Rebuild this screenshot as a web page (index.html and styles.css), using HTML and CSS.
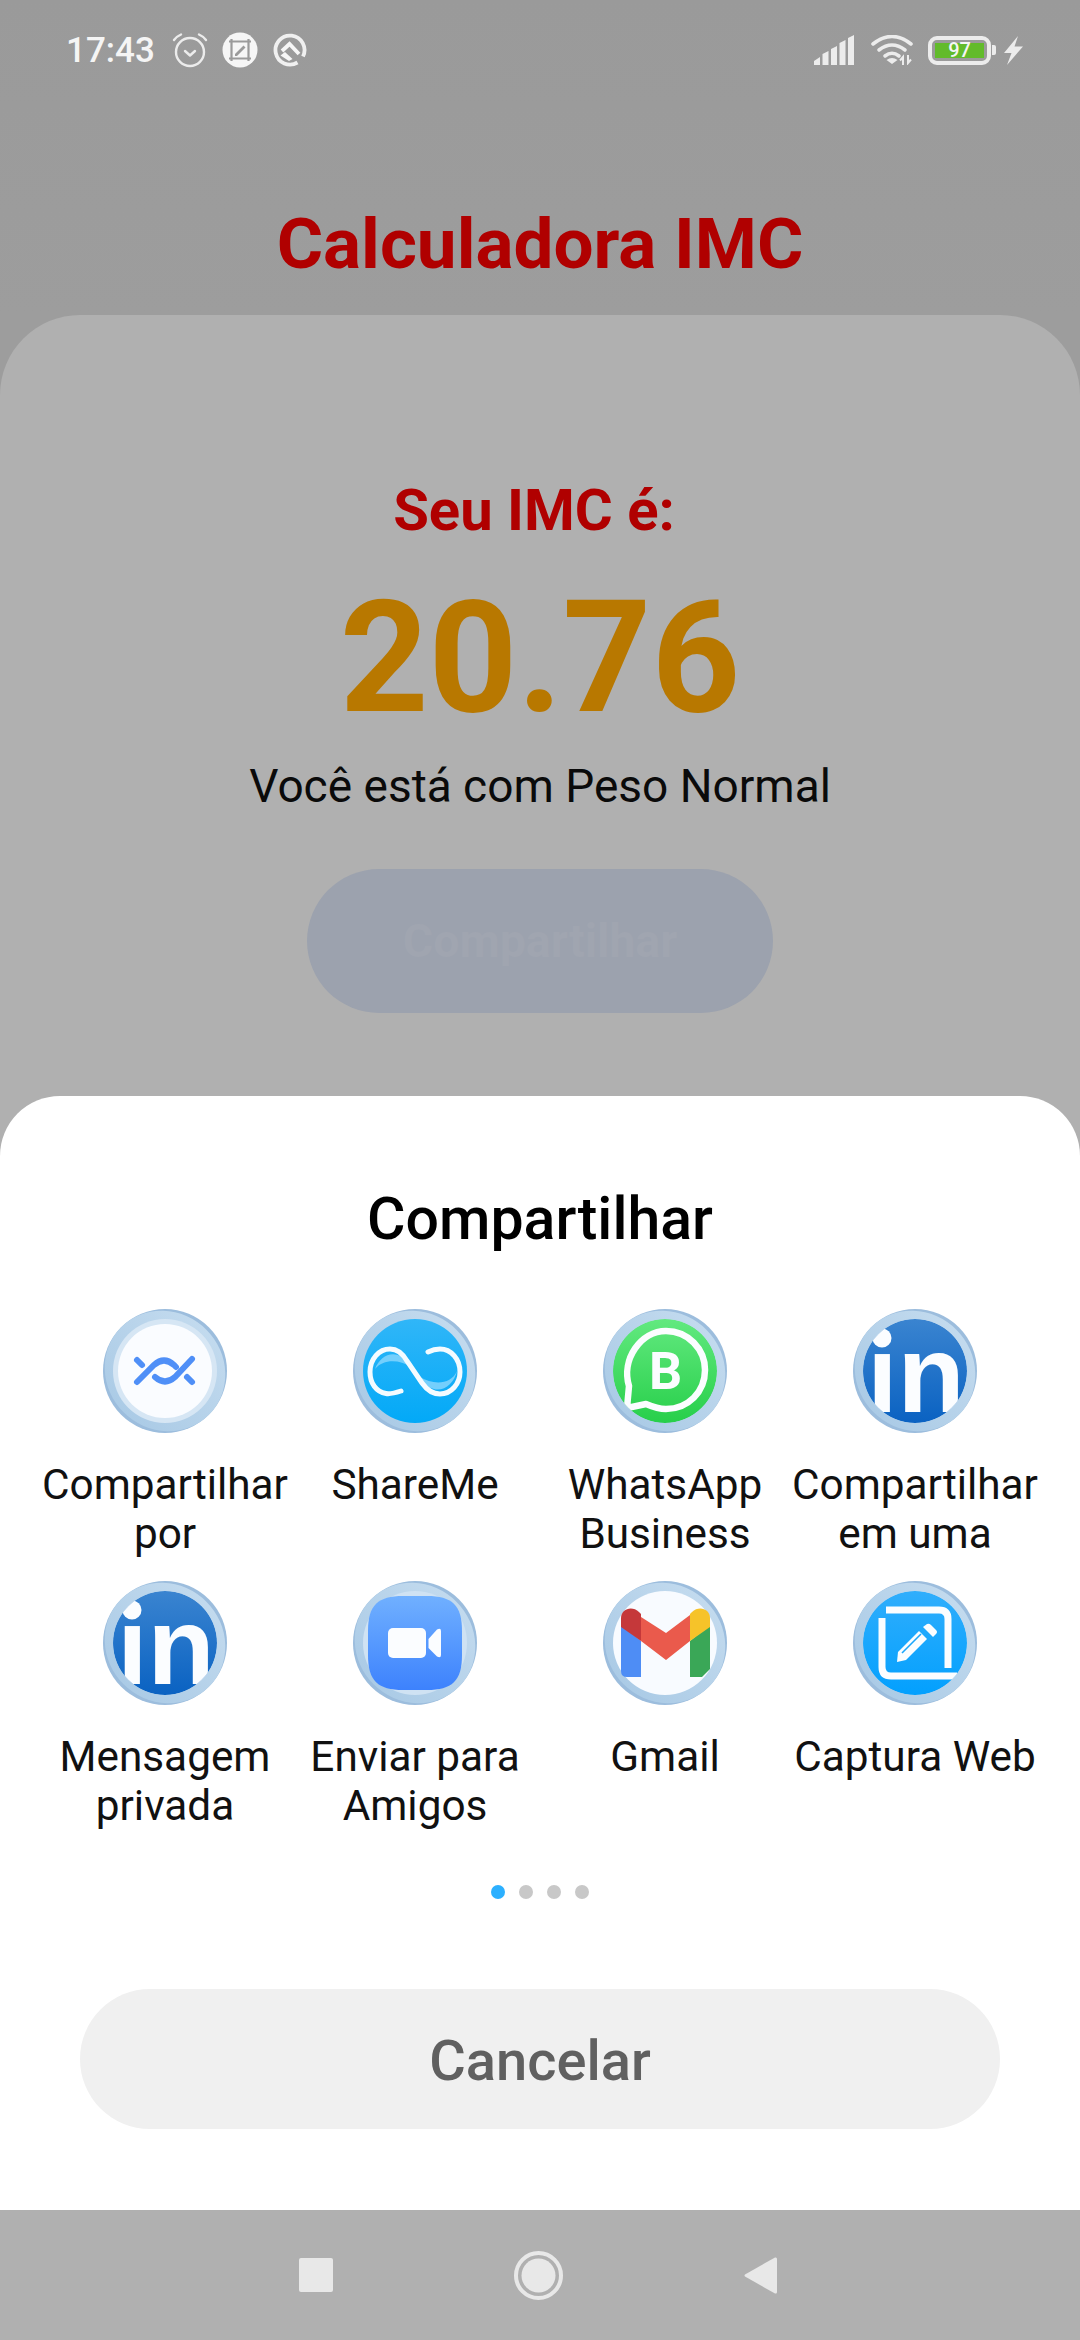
FILE: index.html
```html
<!DOCTYPE html>
<html lang="pt">
<head>
<meta charset="utf-8">
<title>Calculadora IMC</title>
<link rel="stylesheet" href="styles.css">
</head>
<body>
<svg class="defs" aria-hidden="true">
  <defs>
    <linearGradient id="ringFill" x1="0" y1="0" x2="0" y2="1"><stop offset="0" stop-color="#c2daee"/><stop offset="1" stop-color="#abcbe6"/></linearGradient>
    <linearGradient id="gSky" x1="0" y1="0" x2="0" y2="1"><stop offset="0" stop-color="#30b6f8"/><stop offset="1" stop-color="#03a9f7"/></linearGradient>
    <linearGradient id="gGreen" x1="0" y1="0" x2="0" y2="1"><stop offset="0" stop-color="#62e97f"/><stop offset="1" stop-color="#27cf4a"/></linearGradient>
    <linearGradient id="gLinked" x1="0" y1="0" x2="0" y2="1"><stop offset="0" stop-color="#3a84d0"/><stop offset="1" stop-color="#0a62c2"/></linearGradient>
    <linearGradient id="gZoom" x1="0" y1="0" x2="0" y2="1"><stop offset="0" stop-color="#70b0ff"/><stop offset="1" stop-color="#3d82fd"/></linearGradient>
    <linearGradient id="gCapture" x1="0" y1="0" x2="0" y2="1"><stop offset="0" stop-color="#30aefc"/><stop offset="1" stop-color="#03a0fe"/></linearGradient>
    <clipPath id="disc"><circle cx="62" cy="62" r="52"/></clipPath>
    <g id="ring">
      <circle cx="62" cy="62" r="62" fill="#9cbddd"/>
      <ellipse cx="62" cy="62" rx="62" ry="58.500" transform="rotate(45 62 62)" fill="url(#ringFill)"/>
    </g>
    <g id="linkedin" clip-path="url(#disc)">
      <circle cx="62" cy="62" r="52" fill="url(#gLinked)"/>
      <circle cx="29" cy="29" r="9.500" fill="#fbfdff"/>
      <text x="14" y="103" class="logo-in">ın</text>
    </g>
  </defs>
</svg>

<main class="screen">
  <div class="app">
    <header class="status">
      <div class="status-left">
        <span class="clock">17:43</span>
        <svg class="st-icon" width="36" height="36" viewBox="0 0 36 36" aria-hidden="true"><g fill="none" stroke="#ececec" stroke-width="2.400" stroke-linecap="round" stroke-linejoin="round"><circle cx="18" cy="20" r="14"/><path d="M2 8 Q4.500 4.500 9 2.500M34 8 Q31.500 4.500 27 2.500"/><path d="M13 19 L18 23.500 L23 19"/></g></svg>
        <svg class="st-icon" width="36" height="36" viewBox="0 0 36 36" aria-hidden="true"><circle cx="18" cy="18" r="17.500" fill="#f6f6f6"/><path d="M7 9.500 H29 M26.500 7 V29 M29 26.500 H7 M9.500 29 V7" fill="none" stroke="#9b9b9b" stroke-width="2.200"/><path d="M13 22 L21.500 13.500 L23.500 15.500 L15 24 H13Z" fill="#9b9b9b"/></svg>
        <svg class="st-icon" width="36" height="36" viewBox="0 0 36 36" aria-hidden="true"><path d="M25.500 30.500 A14.500 14.500 0 1 1 31 24.500" fill="none" stroke="#f0f0f0" stroke-width="3.800"/><path d="M10 19 L17.500 12 L27 22" fill="none" stroke="#f6f6f6" stroke-width="3.800"/><path d="M13 20 L20.500 27 L17 29 L8.500 23.500Z" fill="#f6f6f6"/></svg>
      </div>
      <div class="status-right">
        <svg width="40" height="30" viewBox="0 0 40 30" aria-hidden="true"><path d="M0 30 V26 L6 22 V30Z M8.500 30 V19 L14.500 16 V30Z M17 30 V14 L23 11 V30Z M25.500 30 V8 L31.500 5 V30Z M34 30 V3 L40 0 V30Z" fill="#ececec"/></svg>
        <svg class="wifi" width="44" height="30" viewBox="0 0 44 30" aria-hidden="true"><g fill="none" stroke="#ececec" stroke-width="3.600" stroke-linecap="round"><path d="M2 9 Q21 -6 40 9"/><path d="M8 15 Q21 5 34 15"/><path d="M14 21 Q21 15.500 28 21"/></g><path d="M15.500 25 Q21 21 26.500 25 L21 29Z" fill="#ececec"/><path d="M32 30 V22 L29 25.500 M37 20 V28 L40 24.500" fill="none" stroke="#ececec" stroke-width="2"/></svg>
        <div class="battery">
          <div class="battery-shell"><span class="battery-level">97</span></div>
          <span class="battery-nub"></span>
        </div>
        <svg width="20" height="29" viewBox="0 0 20 29" aria-hidden="true"><path d="M14 0 L0 17 H7.500 L3 29 L19 10.500 H10.500Z" fill="#ececec"/></svg>
      </div>
    </header>
    <h1 class="app-title">Calculadora IMC</h1>
    <section class="card">
      <h2 class="result-label">Seu IMC é:</h2>
      <p class="result-value">20.76</p>
      <p class="result-text">Você está com Peso Normal</p>
      <div class="share-button">Compartilhar</div>
    </section>
  </div>

  <div class="overlay">
    <section class="sheet">
      <h2 class="sheet-title">Compartilhar</h2>
      <div class="apps">
        <div class="app-item">
          <svg class="app-icon" viewBox="0 0 124 124" aria-hidden="true"><use href="#ring"/><circle cx="62" cy="62" r="52" fill="#d6e6f4"/><circle cx="62" cy="62" r="47" fill="#fafcff"/><g fill="none" stroke="#4f8ff7" stroke-width="6" stroke-linecap="round"><path d="M34 73 L51 56 Q61 47 71 56 L73 58"/><path d="M52 68 Q62 77 72 68 L89 50"/><path d="M34 51 L39 56"/><path d="M84 68 L89 73"/></g></svg>
          <span class="app-label">Compartilhar por</span>
        </div>
        <div class="app-item">
          <svg class="app-icon" viewBox="0 0 124 124" aria-hidden="true"><use href="#ring"/><circle cx="62" cy="62" r="52" fill="url(#gSky)"/><path d="M22 60 C28 44 46 38 58 58 C46 50 30 50 22 60Z M67 68 C80 76 98 76 104 62 C100 80 80 90 67 68Z" fill="#74cffc"/><path d="M48 82 C42 84 36 85 33 84.500 C23 83 17 74 17 63 C17 50 26 40 37 40 C45 40 50 45 54 52 L69 74 C74 81 80 85 87 85 C98 85 107 75 107 63 C107 50 98 40 87 40 C83 40 79 41 75 43" fill="none" stroke="#f4fbff" stroke-width="5" stroke-linecap="round"/></svg>
          <span class="app-label">ShareMe</span>
        </div>
        <div class="app-item">
          <svg class="app-icon" viewBox="0 0 124 124" aria-hidden="true"><use href="#ring"/><g clip-path="url(#disc)"><circle cx="62" cy="62" r="52" fill="url(#gGreen)"/><path d="M26 77 C18 50 38 22 63 22 C85 22 102 40 102 61 C102 83 85 100 63 100 C56 100 50 98 43 95 L24 99Z" fill="none" stroke="#fbfdff" stroke-width="6.500" stroke-linejoin="round"/><text x="62.500" y="80" class="logo-b">B</text></g></svg>
          <span class="app-label">WhatsApp Business</span>
        </div>
        <div class="app-item">
          <svg class="app-icon" viewBox="0 0 124 124" aria-hidden="true"><use href="#ring"/><use href="#linkedin"/></svg>
          <span class="app-label">Compartilhar em uma</span>
        </div>
        <div class="app-item">
          <svg class="app-icon" viewBox="0 0 124 124" aria-hidden="true"><use href="#ring"/><use href="#linkedin"/></svg>
          <span class="app-label">Mensagem privada</span>
        </div>
        <div class="app-item">
          <svg class="app-icon" viewBox="0 0 124 124" aria-hidden="true"><use href="#ring"/><circle cx="62" cy="62" r="52" fill="#cfe2f3"/><path d="M15 50 C15 24 25 15 50 15 H74 C99 15 109 24 109 50 V74 C109 100 99 109 74 109 H50 C25 109 15 100 15 74Z" fill="url(#gZoom)"/><rect x="35" y="47" width="38" height="30" rx="5" fill="#fbfdff"/><path d="M75.500 58 L84 48.500 Q88 46.500 88 50 V74 Q88 77.500 84 75.500 L75.500 67Z" fill="#fbfdff"/></svg>
          <span class="app-label">Enviar para Amigos</span>
        </div>
        <div class="app-item">
          <svg class="app-icon" viewBox="0 0 124 124" aria-hidden="true"><use href="#ring"/><circle cx="62" cy="62" r="52" fill="#f8fbff"/><path d="M18 44 L38 60 V96 H24 Q18 96 18 90Z" fill="#4e8df5"/><path d="M107 44 L87 60 V96 H99 L107 88Z" fill="#3aa757"/><path d="M38 36 L63 52 L87 34 V60 L63 79 L38 60Z" fill="#ea5a4c"/><path d="M18 46 V37 C18 28 29 24 36 31 L38 33 V60Z" fill="#c5383a"/><path d="M107 46 V37 C107 28 96 24 89 31 L87 33 V60Z" fill="#f6c329"/></svg>
          <span class="app-label">Gmail</span>
        </div>
        <div class="app-item">
          <svg class="app-icon" viewBox="0 0 124 124" aria-hidden="true"><use href="#ring"/><g clip-path="url(#disc)"><circle cx="62" cy="62" r="52" fill="url(#gCapture)"/><g fill="none" stroke="#fbfdff" stroke-width="7"><path d="M33 29 H86 Q95 29 95 38 V87"/><path d="M29 37 V86 Q29 95 38 95 H104"/></g><path d="M44 81 L45 71 L66 50 L74 58 L53 79Z" fill="#fbfdff"/><path d="M70 46 L74 43 Q76 42 78 44 L83 49 Q85 51 83 53 L80 56Z" fill="#fbfdff"/><path d="M49 72 L68 53" stroke="#1aa6fb" stroke-width="1.600"/></g></svg>
          <span class="app-label">Captura Web</span>
        </div>
      </div>
      <div class="dots">
        <span class="dot dot-active"></span>
        <span class="dot"></span>
        <span class="dot"></span>
        <span class="dot"></span>
      </div>
      <div class="cancel">Cancelar</div>
    </section>
    <nav class="nav">
      <span class="nav-square"></span>
      <svg width="49" height="49" viewBox="0 0 49 49" aria-hidden="true"><circle cx="24.500" cy="24.500" r="22.500" fill="none" stroke="#e8e8e8" stroke-width="4"/><circle cx="24.500" cy="24.500" r="17" fill="#e8e8e8"/></svg>
      <svg width="33" height="37" viewBox="0 0 33 37" aria-hidden="true"><path d="M1 17.500 L31 .5 Q33 0 33 2 V35 Q33 37 31 36.500 L1 19.500 Q0 18.500 1 17.500Z" fill="#e8e8e8"/></svg>
    </nav>
  </div>
</main>
</body>
</html>
```
FILE: styles.css
```css
* { box-sizing: border-box; }
html, body { margin: 0; padding: 0; }
body { font-family: Roboto, "Liberation Sans", sans-serif; }
.defs { position: absolute; width: 0; height: 0; }

.screen {
  position: relative;
  width: 1080px;
  height: 2340px;
  overflow: hidden;
  background: linear-gradient(#9a9a9a, #9d9d9d 315px);
}
.app { display: flex; flex-direction: column; height: 100%; }

.status {
  height: 100px;
  flex: none;
  display: flex;
  justify-content: space-between;
  align-items: center;
  padding: 0 56px 0 66px;
}
.status-left { display: flex; align-items: center; gap: 14px; }
.clock { font-size: 35px; font-weight: 500; color: #f5f5f5; margin-right: 3px; }
.st-icon { display: block; }
.status-right { display: flex; align-items: center; gap: 17px; }
.wifi { margin-right: -4px; }
.battery { display: flex; align-items: center; gap: 1px; margin-right: -9px; }
.battery-shell {
  width: 63px;
  height: 29px;
  border: 4px solid #ececec;
  border-radius: 9px;
  padding: 3px;
  display: flex;
}
.battery-level {
  flex: 1;
  background: #62bb2b;
  color: #f5f5f5;
  font-size: 20px;
  line-height: 15px;
  text-align: center;
  font-weight: 500;
}
.battery-nub { width: 4px; height: 10px; background: #ececec; border-radius: 0 2px 2px 0; }

.app-title {
  margin: 104px 0 31px;
  font-size: 71px;
  line-height: 80px;
  font-weight: 700;
  color: #b00000;
  text-align: center;
}
.card {
  flex: 1;
  background: #b0b0b0;
  border-radius: 80px 80px 0 0;
  padding-top: 165px;
  display: flex;
  flex-direction: column;
  align-items: center;
}
.result-label { margin: 0; padding-right: 12px; font-size: 58px; line-height: 60px; font-weight: 700; color: #b00000; }
.result-value { margin: 28px 0 0; font-size: 155px; line-height: 180px; font-weight: 700; color: #b87800; }
.result-text { margin: 8px 0 0; font-size: 46px; line-height: 60px; color: #0a0a0a; }
.share-button {
  margin-top: 53px;
  width: 466px;
  height: 144px;
  border-radius: 72px;
  background: #9ca2ae;
  color: #a0a5b0;
  font-size: 46.500px;
  font-weight: 700;
  display: flex;
  align-items: center;
  justify-content: center;
}

.overlay { position: absolute; left: 0; right: 0; bottom: 0; }
.sheet {
  height: 1114px;
  background: #fff;
  border-radius: 60px 60px 0 0;
  padding-top: 93px;
  display: flex;
  flex-direction: column;
  align-items: center;
}
.sheet-title { margin: 0 0 60px; font-size: 59px; line-height: 60px; font-weight: 500; color: #000; }
.apps {
  width: 1000px;
  display: grid;
  grid-template-columns: repeat(4, 250px);
  grid-auto-rows: 272px;
}
.app-item { display: flex; flex-direction: column; align-items: center; }
.app-icon { width: 124px; height: 124px; display: block; flex: none; }
.app-label {
  margin-top: 27px;
  width: 250px;
  font-size: 42.300px;
  line-height: 49px;
  color: #111;
  text-align: center;
}
.logo-in { font-family: "Liberation Sans", sans-serif; font-weight: 700; font-size: 110px; fill: #fbfdff; }
.logo-b { font-family: Roboto, sans-serif; font-weight: 700; font-size: 52px; fill: #fbfdff; text-anchor: middle; }

.dots { display: flex; gap: 14px; margin-top: 32px; }
.dot { width: 14px; height: 14px; border-radius: 50%; background: #c8c8c8; }
.dot-active { background: #2cb0ff; }
.cancel {
  margin-top: 90px;
  width: 920px;
  height: 140px;
  padding-top: 3px;
  border-radius: 70px;
  background: #f0f0f0;
  color: #606060;
  font-size: 56px;
  font-weight: 500;
  display: flex;
  align-items: center;
  justify-content: center;
}

.nav {
  height: 130px;
  background: #b0b0b0;
  display: flex;
  align-items: center;
  justify-content: center;
  gap: 181px;
  padding-right: 4px;
}
.nav-square { width: 34px; height: 34px; background: #e8e8e8; border-radius: 2px; }
```
